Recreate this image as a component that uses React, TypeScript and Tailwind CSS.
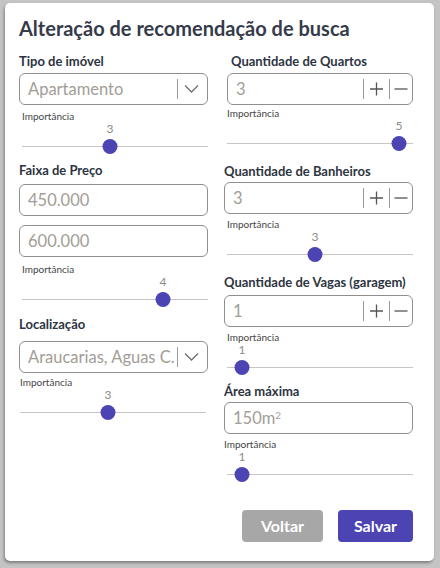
import React from "react"

const font = { fontFamily: "Lato, 'Noto Sans', sans-serif" }

function Label({ children, className = "" }: { children: React.ReactNode; className?: string }) {
  return (
    <div className={`h-4 text-[13px] font-bold leading-4 text-[#2d3441] ${className}`}>
      {children}
    </div>
  )
}

function TextBox({ value, className = "", children }: { value: React.ReactNode; className?: string; children?: React.ReactNode }) {
  return (
    <div className={`flex h-8 items-center rounded-md border border-[#8f8f8f] bg-white pl-2 ${className}`}>
      <span className="flex-1 overflow-hidden whitespace-nowrap text-[16.5px] leading-5 text-[#a29d96]">{value}</span>
      {children}
    </div>
  )
}

function Chevron() {
  return (
    <div className="flex h-full items-center">
      <div className="h-5 w-px bg-[#9a9a9a]" />
      <svg width="28" height="16" viewBox="0 0 28 16" className="mr-[1px]">
        <path d="M7 4.5 L13.5 11 L20 4.5" fill="none" stroke="#6f6f6f" strokeWidth="1.3" />
      </svg>
    </div>
  )
}

function Stepper() {
  return (
    <div className="flex h-full items-center">
      <div className="h-5 w-px bg-[#9a9a9a]" />
      <svg width="25" height="16" viewBox="0 0 25 16">
        <path d="M6 8 H19 M12.5 1.5 V14.5" fill="none" stroke="#555" strokeWidth="1.3" />
      </svg>
      <div className="h-5 w-px bg-[#9a9a9a]" />
      <svg width="22" height="16" viewBox="0 0 22 16">
        <path d="M4.5 8 H17.5" fill="none" stroke="#555" strokeWidth="1.3" />
      </svg>
    </div>
  )
}

function Importance({ value, x, className = "", labelClass = "" }: { value: number; x: number; className?: string; labelClass?: string }) {
  return (
    <div className={className}>
      <div className={`h-3 text-[10px] leading-3 text-[#454545] ${labelClass}`}>Importância</div>
      <div className="relative h-3">
        <span
          className="absolute top-[1px] -translate-x-1/2 text-[12px] leading-3 text-[#8c8c8c]"
          style={{ left: x }}
        >
          {value}
        </span>
      </div>
      <div className="relative mt-1 h-4">
        <div className="absolute left-0 right-0 top-[7.5px] h-px bg-[#c9c6c2]" />
        <div
          className="absolute top-[0.5px] h-[15px] w-[15px] -translate-x-1/2 rounded-full bg-[#4c44b2]"
          style={{ left: x }}
        />
      </div>
    </div>
  )
}

export default function App() {
  return (
    <div className="h-[568px] w-[440px] bg-[#c4c4c4] pl-[5px] pt-[3px]" style={font}>
      <div className="h-[558px] w-[429px] rounded-[5px] bg-white pl-[14px] pt-[13px] shadow-[-1px_2px_3px_rgba(0,0,0,0.35)]">
        <h1 className="h-6 text-[20px] font-bold leading-6 text-[#353b4a]">
          Alteração de recomendação de busca
        </h1>

        <div className="mt-[13px] flex gap-[19px]">
          <div className="flex w-[189px] flex-col">
            <Label>Tipo de imóvel</Label>
            <TextBox value="Apartamento" className="mt-1">
              <Chevron />
            </TextBox>
            <Importance value={3} x={88} className="ml-[3px] mt-[5px]" />

            <Label className="mt-2">Faixa de Preço</Label>
            <TextBox value="450.000" className="mt-1.5" />
            <TextBox value="600.000" className="mt-[9px]" />
            <Importance value={4} x={141} className="ml-[3px] mt-1.5" />

            <Label className="mt-[9px]">Localização</Label>
            <TextBox value="Araucarias, Aguas C." className="mt-[9px]">
              <Chevron />
            </TextBox>
            <Importance value={3} x={88} className="ml-[1px] mr-[2px] mt-[3px]" />
          </div>

          <div className="flex w-[186px] flex-col">
            <Label className="pl-1">Quantidade de Quartos</Label>
            <TextBox value="3" className="mt-1">
              <Stepper />
            </TextBox>
            <Importance value={5} x={172} className="mt-0.5" />

            <Label className="-ml-[3px] mt-3">Quantidade de Banheiros</Label>
            <TextBox value="3" className="-ml-[3px] mt-[3px]">
              <Stepper />
            </TextBox>
            <Importance value={3} x={88} className="mt-1" />

            <Label className="-ml-[3px] mt-3">Quantidade de Vagas (garagem)</Label>
            <TextBox value="1" className="-ml-[3px] mt-[5px]">
              <Stepper />
            </TextBox>
            <Importance value={1} x={15} className="mt-1" />

            <Label className="-ml-[3px] mt-2">Área máxima</Label>
            <TextBox value={<>150m<sup className="text-[10px]">2</sup></>} className="-ml-[3px] mt-[3px]" />
            <Importance value={1} x={15} className="mt-1" labelClass="-ml-[3px]" />

            <div className="mt-7 flex justify-end gap-[15px]">
              <button className="h-8 w-[81px] rounded bg-[#a7a7a7] text-[16px] font-bold text-white">
                Voltar
              </button>
              <button className="h-8 w-[75px] rounded bg-[#4c44b2] text-[16px] font-bold text-white">
                Salvar
              </button>
            </div>
          </div>
        </div>
      </div>
    </div>
  )
}
